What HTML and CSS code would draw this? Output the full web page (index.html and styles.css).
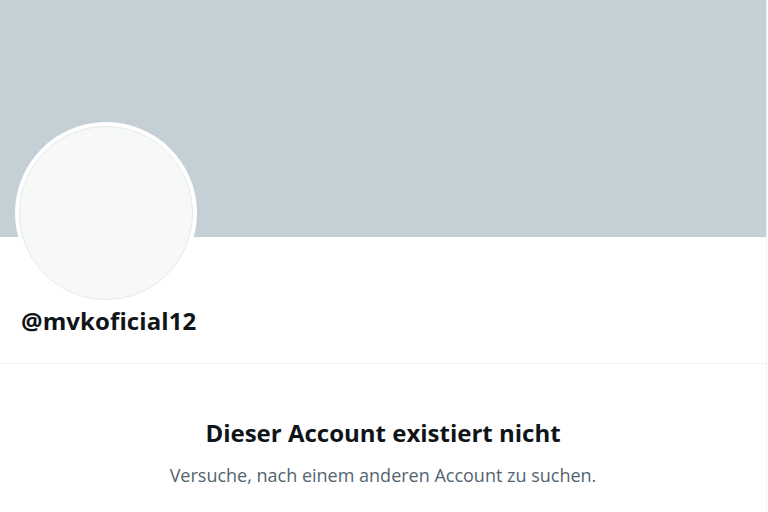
FILE: index.html
```html
<!DOCTYPE html>
<html lang="de">
<head>
<meta charset="utf-8">
<link rel="stylesheet" href="styles.css">
</head>
<body>
<main class="column">
  <div class="banner"></div>
  <div class="profile">
    <div class="avatar"><div class="avatar-inner"></div></div>
    <div class="handle">@mvkoficial12</div>
  </div>
  <section class="empty">
    <h2 class="empty-title">Dieser Account existiert nicht</h2>
    <p class="empty-text">Versuche, nach einem anderen Account zu suchen.</p>
  </section>
</main>
</body>
</html>
```
FILE: styles.css
```css
html, body {
  margin: 0;
  padding: 0;
  background: #ffffff;
}
body {
  font-family: "Open Sans", "Noto Sans", sans-serif;
  color: #0f1419;
}
.column {
  width: 766px;
  border-right: 1px solid #eff3f4;
  min-height: 512px;
}
.banner {
  height: 237px;
  background: #c4cfd6;
}
.profile {
  display: flow-root;
  padding: 0 0 0 15px;
  height: 127px;
  border-bottom: 1px solid #eff3f4;
  box-sizing: border-box;
}
.avatar {
  width: 182px;
  height: 182px;
  margin-top: -115px;
  border-radius: 50%;
  background: #ffffff;
  box-sizing: border-box;
  padding: 4px;
  position: relative;
}
.avatar-inner {
  width: 100%;
  height: 100%;
  border-radius: 50%;
  background: #f7f9f9;
  border: 1px solid #e6e9ea;
  box-sizing: border-box;
}
.handle {
  margin-top: 3px;
  margin-left: 6px;
  font-size: 24px;
  font-weight: 700;
  line-height: 28px;
  letter-spacing: 0.1px;
}
.empty {
  text-align: center;
  padding-top: 54px;
}
.empty-title {
  margin: 0;
  font-size: 24px;
  font-weight: 700;
  line-height: 30px;
}
.empty-text {
  margin: 16px 0 0;
  font-size: 18px;
  line-height: 22px;
  color: #536471;
}
```
